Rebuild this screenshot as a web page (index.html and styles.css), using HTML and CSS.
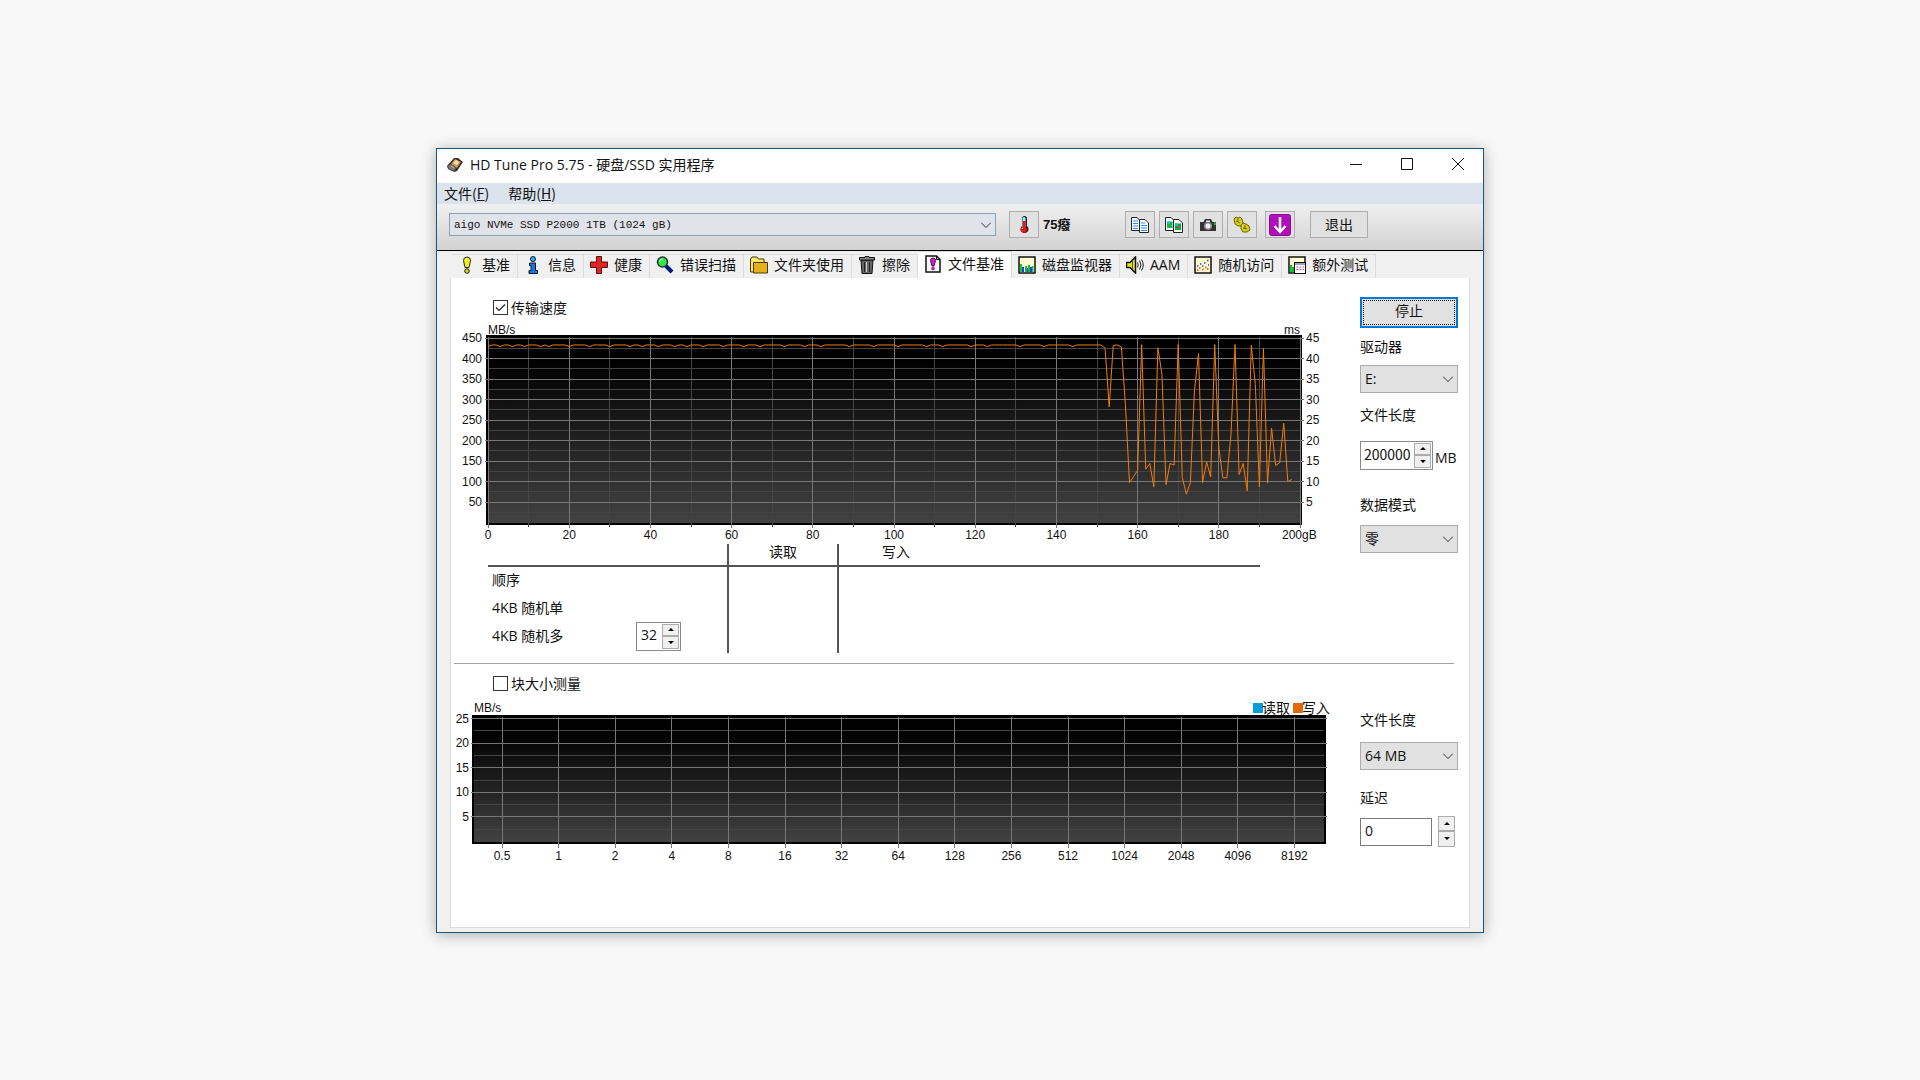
FILE: index.html
```html
<!DOCTYPE html>
<html lang="zh-CN">
<head>
  <meta charset="UTF-8">
  <meta name="viewport" content="width=device-width, initial-scale=1.0">
  <title>HD Tune Pro 5.75 - 硬盘/SSD 实用程序</title>
  <link rel="stylesheet" href="styles.css">
</head>
<body>
  <div class="window">
    <header class="titlebar">
      <svg class="app-icon" viewBox="0 0 16 16">
        <path d="M0 9 7 1 11 1 16 5 10 14 7 15 1 12Z" fill="#3a2d28"/>
        <path d="M4 7 8 2 14 5 10 11Z" fill="#c9975a"/>
        <path d="M6 6 9 3 12 5 10 8Z" fill="#f6dfae"/>
        <path d="M1 9 4 7 9 11 7 14 2 12Z" fill="#77737c"/>
        <path d="M4 9 7 11" stroke="#e6c34a"/>
      </svg>
      <h1 class="title">HD Tune Pro 5.75 - 硬盘/SSD 实用程序</h1>
      <button class="win-btn" aria-label="最小化"><svg viewBox="0 0 12 12"><path d="M0 6.5H12"/></svg></button>
      <button class="win-btn" aria-label="最大化"><svg viewBox="0 0 12 12"><path d="M.5 .5H11.5V11.5H.5Z"/></svg></button>
      <button class="win-btn" aria-label="关闭"><svg viewBox="0 0 12 12"><path d="M0 0 12 12M12 0 0 12"/></svg></button>
    </header>

    <nav class="menubar">
      <button class="menu">文件(<u>F</u>)</button>
      <button class="menu">帮助(<u>H</u>)</button>
    </nav>

    <div class="toolbar">
      <select class="drive" aria-label="硬盘">
        <option>aigo NVMe SSD P2000 1TB (1024 gB)</option>
      </select>
      <button class="tool" aria-label="温度">
        <svg viewBox="0 0 18 18">
          <path d="M7 2.500a2.500 2.500 0 0 1 5 0V10a4 4 0 1 1-5 0Z" fill="#222"/>
          <path d="M7.500 2.500a1.500 1.500 0 0 1 3 0V11H7.500Z" fill="#8ff"/>
          <path d="M8 5H10.500V11A3 3 0 1 1 7 11L8 10.500Z" fill="#e8141c"/>
          <path d="M7 13a1 1 0 0 1 1-1" stroke="#fff" fill="none"/>
        </svg>
      </button>
      <span class="temp">75癈</span>
      <div class="tools">
        <button class="tool" aria-label="复制文本">
          <svg viewBox="0 0 18 18">
            <path d="M.5 1.500H6L9 4.500V14.500H.5Z" fill="#fff" stroke="#222"/>
            <path d="M2 5H7M2 7.500H7M2 10H7M2 12.500H7" stroke="#1e90ff"/>
            <path d="M8.500 3.500H14L17.500 7V16.500H8.500Z" fill="#fff" stroke="#222"/>
            <path d="M10 7H14M10 9.500H16M10 12H16M10 14.500H16" stroke="#1e90ff"/>
          </svg>
        </button>
        <button class="tool" aria-label="复制图像">
          <svg viewBox="0 0 18 18">
            <path d="M.5 1.500H6L9 4.500V14.500H.5Z" fill="#fff" stroke="#222"/>
            <path d="M2 5.500H7.500V12H2Z" fill="#19b44a"/><path d="M2 5.500H5V8H2Z" fill="#16c5d8"/>
            <path d="M8.500 3.500H14L17.500 7V16.500H8.500Z" fill="#fff" stroke="#222"/>
            <path d="M10 7.500H16V14H10Z" fill="#12a53e"/><path d="M10 7.500H13V10H10Z" fill="#15bfd6"/><path d="M13 10H15V12H13Z" fill="#e33"/>
          </svg>
        </button>
        <button class="tool" aria-label="截图">
          <svg viewBox="0 0 18 18">
            <path d="M1 6H4.500L6 3H12L13.500 6H17V15H1Z" fill="#333"/>
            <path d="M7 4.500H11V6H7Z" fill="#ddd"/>
            <circle cx="9" cy="10" r="4" fill="#888"/><circle cx="9" cy="10" r="2.500" fill="#eee"/>
            <path d="M15 6.500H17V9H15Z" fill="#2b4"/>
          </svg>
        </button>
        <button class="tool" aria-label="选项">
          <svg viewBox="0 0 18 18">
            <path d="M1 3 3 1 5 2 7 1 9 3 10 7 8 10 5 10 2 8Z" fill="#d8cc1c" stroke="#6d6600"/>
            <path d="M8 9 10 7 13 8 16 10 17 14 14 16 10 16 8 13Z" fill="#d8cc1c" stroke="#6d6600"/>
            <path d="M5 2V6M3 5 7 7M12 9V13M10 12 14 13" stroke="#6d6600" fill="none"/>
          </svg>
        </button>
        <button class="tool tool-save" aria-label="保存">
          <svg viewBox="0 0 22 22">
            <rect x=".5" y=".5" width="21" height="21" rx="2" fill="#b40cbc" stroke="#8d0a94"/>
            <path d="M11 3V17M5.500 12 11 18 16.500 12" stroke="#fff" stroke-width="2.500" fill="none"/>
          </svg>
        </button>
        <button class="exit">退出</button>
      </div>
    </div>

    <div class="tabs" role="tablist">
      <button class="tab" role="tab">
        <svg viewBox="0 0 18 18">
          <path d="M5.500 4.500a3.500 3.500 0 0 1 7 0L11 11.500H7Z" fill="#f2ee1c" stroke="#222"/>
          <circle cx="9" cy="15" r="2.300" fill="#d8d212" stroke="#222"/>
          <path d="M7.500 4a1.500 1.500 0 0 1 1.500-1.500" stroke="#fff" fill="none"/>
        </svg>基准</button>
      <button class="tab" role="tab">
        <svg viewBox="0 0 18 18">
          <circle cx="9" cy="3" r="2.500" fill="#27b7ee" stroke="#113"/>
          <path d="M5.500 7H11.500V14.500H13.500V17.500H5V14.500H7V9.500H5.500Z" fill="#1379d8" stroke="#113"/>
        </svg>信息</button>
      <button class="tab" role="tab">
        <svg viewBox="0 0 18 18">
          <path d="M6.500 .5H11.500V6H17.500V11.500H11.500V17.500H6.500V11.500H.5V6H6.500Z" fill="#e32222" stroke="#5b1010"/>
        </svg>健康</button>
      <button class="tab" role="tab">
        <svg viewBox="0 0 18 18">
          <path d="M10 10 16 16" stroke="#001a80" stroke-width="4"/>
          <circle cx="6.500" cy="6" r="5" fill="#2fe84a" stroke="#233" stroke-width="1.500"/>
          <path d="M3.500 6a3 3 0 0 1 3-3" stroke="#cfffd5" fill="none"/>
        </svg>错误扫描</button>
      <button class="tab" role="tab">
        <svg viewBox="0 0 18 18">
          <path d="M.5 16V3L2 1H7L8.500 3H14V16Z" fill="#f8e56a" stroke="#4b3b00"/>
          <path d="M3.500 6.500H17.500V17H3.500Z" fill="#e3b21c" stroke="#4b3b00"/>
        </svg>文件夹使用</button>
      <button class="tab" role="tab">
        <svg viewBox="0 0 18 18">
          <path d="M3 4H15L14 17.500H4Z" fill="#666" stroke="#111"/>
          <path d="M6.500 6V16M11.500 6V16" stroke="#222"/><path d="M8.500 6V16" stroke="#ccc"/>
          <path d="M1.500 1.500H7V.5H11V1.500H16.500V4H1.500Z" fill="#888" stroke="#111"/>
        </svg>擦除</button>
      <button class="tab tab-active" role="tab" aria-selected="true">
        <svg viewBox="0 0 18 18">
          <path d="M2 1H12.500L16 4.500V17H2Z" fill="#fff" stroke="#111" stroke-width="1.500"/>
          <path d="M12.500 1V4.500H16" fill="none" stroke="#111"/>
          <path d="M6.500 5.500a2.500 2.500 0 0 1 5 0L10 11H8Z" fill="#d41cd0" stroke="#505"/>
          <circle cx="9" cy="13.500" r="1.500" fill="#d41cd0" stroke="#505" stroke-width=".5"/>
        </svg>文件基准</button>
      <button class="tab" role="tab">
        <svg viewBox="0 0 18 18">
          <rect x="1" y="1" width="16" height="16" fill="#fffbd0" stroke="#111" stroke-width="1.500"/>
          <path d="M2 8H4V16H2ZM7 10H9V16H7ZM10 9H12V16H10ZM14 10H15.500V16H14Z" fill="#12c23a"/>
          <path d="M4 11H6V16H4ZM9 12H10V16H9ZM12 11H14V16H12Z" fill="#2340d8"/>
        </svg>磁盘监视器</button>
      <button class="tab" role="tab">
        <svg viewBox="0 0 18 18">
          <path d="M.5 6.500H4L9.500 1V17L4 11.500H.5Z" fill="#e9e21e" stroke="#111" stroke-width="1.500"/>
          <path d="M6.500 5V13" stroke="#555"/>
          <path d="M11.500 6.500Q13 9 11.500 11.500M13.500 4.500Q16.500 9 13.500 13.500M15.500 3.500Q19 9 15.500 14.500" stroke="#222" fill="none"/>
        </svg>AAM</button>
      <button class="tab" role="tab">
        <svg viewBox="0 0 18 18">
          <rect x="1" y="1" width="16" height="16" fill="#fff8c8" stroke="#111" stroke-width="1.500"/>
          <path d="M3 10H4.500M6 8H7.500M8 10H9.500M10 7H11.500M13 4.500H14.500M14 9H15" stroke="#3a4ae0" stroke-width="1.500"/>
          <path d="M3 14H4.500M5 12H6.500M8 13.500H9.500M11 11.500H12.500M13 13H14.500" stroke="#e04a3a" stroke-width="1.500"/>
        </svg>随机访问</button>
      <button class="tab" role="tab">
        <svg viewBox="0 0 18 18">
          <rect x="1" y="1" width="16" height="16" fill="#fffbd0" stroke="#111" stroke-width="1.500"/>
          <path d="M2 9H4V16H2ZM4 11H6V16H4Z" fill="#12c23a"/>
          <rect x="6.500" y="6.500" width="11" height="11" fill="#fff" stroke="#111"/>
          <path d="M7 8H17" stroke="#8fa0c8" stroke-width="2"/>
          <path d="M8.500 11H10M11.500 11H13M14.500 11H16M8.500 13.500H10M11.500 13.500H13M14.500 13.500H16" stroke="#c33a5a"/>
        </svg>额外测试</button>
    </div>

    <main class="panel">
      <section class="section">
        <div class="measure">
          <label class="check"><input type="checkbox" checked>传输速度</label>
          <svg class="chart" id="transferChart" viewBox="0 0 889 224"></svg>
          <table class="results">
            <thead>
              <tr><th class="col-name"></th><th class="col-read">读取</th><th class="col-write">写入</th></tr>
            </thead>
            <tbody>
              <tr><td>顺序</td><td></td><td></td></tr>
              <tr><td>4KB 随机单</td><td></td><td></td></tr>
              <tr>
                <td>
                  <div class="queue">
                    <label for="queueDepth">4KB 随机多</label>
                    <span class="spinner spinner-small">
                      <input id="queueDepth" type="text" value="32">
                      <span class="steps">
                        <button class="step" aria-label="增加"><svg viewBox="0 0 6 3"><path d="M0 3 3 0 6 3Z"/></svg></button>
                        <button class="step" aria-label="减少"><svg viewBox="0 0 6 3"><path d="M0 0 3 3 6 0Z"/></svg></button>
                      </span>
                    </span>
                  </div>
                </td>
                <td></td><td></td>
              </tr>
            </tbody>
          </table>
        </div>
        <aside class="side">
          <button class="stop">停止</button>
          <label class="caption" for="drive">驱动器</label>
          <select class="field" id="drive"><option>E:</option></select>
          <label class="caption caption-gap" for="fileLength">文件长度</label>
          <div class="length">
            <span class="spinner">
              <input id="fileLength" type="text" value="200000">
              <span class="steps">
                <button class="step" aria-label="增加"><svg viewBox="0 0 6 3"><path d="M0 3 3 0 6 3Z"/></svg></button>
                <button class="step" aria-label="减少"><svg viewBox="0 0 6 3"><path d="M0 0 3 3 6 0Z"/></svg></button>
              </span>
            </span>
            <span class="unit">MB</span>
          </div>
          <label class="caption caption-wide" for="dataMode">数据模式</label>
          <select class="field" id="dataMode"><option>零</option></select>
        </aside>
      </section>

      <section class="section section-block">
        <div class="measure">
          <label class="check"><input type="checkbox">块大小测量</label>
          <svg class="chart" id="blockChart" viewBox="0 0 889 176"></svg>
        </div>
        <aside class="side">
          <label class="caption" for="blockLength">文件长度</label>
          <select class="field" id="blockLength"><option>64 MB</option></select>
          <label class="caption caption-wide" for="delay">延迟</label>
          <div class="delay">
            <input id="delay" type="text" value="0">
            <span class="steps">
              <button class="step" aria-label="增加"><svg viewBox="0 0 6 3"><path d="M0 3 3 0 6 3Z"/></svg></button>
              <button class="step" aria-label="减少"><svg viewBox="0 0 6 3"><path d="M0 0 3 3 6 0Z"/></svg></button>
            </span>
          </div>
        </aside>
      </section>
    </main>
  </div>

  <script src="charts.js"></script>
</body>
</html>
```

FILE: charts.js
```js
const SVG_NS = 'http://www.w3.org/2000/svg';

function add(parent, name, attrs, text) {
  const el = document.createElementNS(SVG_NS, name);
  for (const key in attrs) el.setAttribute(key, attrs[key]);
  if (text !== undefined) el.textContent = text;
  parent.appendChild(el);
  return el;
}

function line(svg, x1, y1, x2, y2, cls) {
  add(svg, 'line', { x1, y1, x2, y2, class: cls });
}

// dark plot area with a black frame
function drawFrame(svg, left, top, right, bottom) {
  const id = svg.id + 'Fill';
  const fill = add(add(svg, 'defs', {}), 'linearGradient', { id, x1: 0, y1: 0, x2: 0, y2: 1 });
  add(fill, 'stop', { offset: '12%', 'stop-color': '#000' });
  add(fill, 'stop', { offset: '100%', 'stop-color': '#424242' });
  add(svg, 'rect', { x: left, y: top, width: right - left, height: bottom - top, class: 'frame' });
  add(svg, 'rect', { x: left + 2, y: top + 2, width: right - left - 4, height: bottom - top - 4, fill: 'url(#' + id + ')' });
}

// transfer rate, MB/s per gB written
const dips = [3, 6, 9, 13, 15, 20, 25, 30, 35, 38, 42, 46, 49, 53, 58, 63, 67, 73, 78, 82, 89, 95, 101, 108, 112, 119, 123, 131, 137, 144];
const rates = [];
for (let i = 0; i < 152; i++) rates.push(dips.includes(i) || i === 0 ? 429 : 433);
rates.push(
  425, 282, 432, 433, 428, 288, 97, 112, 127, 434, 130, 144, 87, 426, 361, 92,
  144, 140, 434, 110, 69, 97, 321, 412, 97, 148, 111, 434, 183, 109, 109, 215,
  434, 117, 144, 77, 432, 337, 87, 425, 96, 230, 139, 146, 242, 100, 105
);

function drawTransfer() {
  const svg = document.getElementById('transferChart');
  const x = (gb) => 37 + gb * 4.06;
  const y = (mb) => 204.5 - mb * 0.41;

  drawFrame(svg, 35, 17, 851, 207);
  for (let v = 25; v <= 425; v += 50) line(svg, 37, y(v), 849, y(v), 'minor');
  for (let v = 10; v < 200; v += 20) line(svg, x(v), 19, x(v), 209, 'minor');
  for (let v = 50; v <= 450; v += 50) {
    line(svg, 34, y(v), 853, y(v), 'major');
    add(svg, 'text', { x: 31, y: y(v) + 4, class: 'end' }, v);
    add(svg, 'text', { x: 855, y: y(v) + 4 }, v / 10);
  }
  for (let v = 0; v <= 200; v += 20) {
    line(svg, x(v), 19, x(v), 210, 'major');
    if (v < 200) add(svg, 'text', { x: x(v), y: 221, class: 'middle' }, v);
  }
  add(svg, 'text', { x: 831, y: 221 }, '200gB');
  add(svg, 'text', { x: 37, y: 16 }, 'MB/s');
  add(svg, 'text', { x: 849, y: 16, class: 'end' }, 'ms');
  add(svg, 'polyline', { points: rates.map((r, i) => x(i) + ',' + y(r)).join(' '), class: 'rate' });
}

function drawBlock() {
  const svg = document.getElementById('blockChart');
  const sizes = [0.5, 1, 2, 4, 8, 16, 32, 64, 128, 256, 512, 1024, 2048, 4096, 8192];
  const y = (mb) => 146.5 - mb * 4.92;

  drawFrame(svg, 21, 20, 875, 149);
  for (let v = 2.5; v < 25; v += 5) line(svg, 23, y(v), 873, y(v), 'minor');
  for (let v = 5; v <= 25; v += 5) {
    line(svg, 20, y(v), 876, y(v), 'major');
    add(svg, 'text', { x: 18, y: y(v) + 4, class: 'end' }, v);
  }
  sizes.forEach((size, i) => {
    const x = 51 + i * 56.6;
    line(svg, x, 22, x, 153, 'major');
    add(svg, 'text', { x: x, y: 165, class: 'middle' }, size);
  });
  add(svg, 'text', { x: 23, y: 17 }, 'MB/s');

  add(svg, 'rect', { x: 802, y: 8, width: 10, height: 10, fill: '#0a9bd8' });
  add(svg, 'text', { x: 811, y: 18, class: 'legend' }, '读取');
  add(svg, 'rect', { x: 842, y: 8, width: 10, height: 10, fill: '#e0690a' });
  add(svg, 'text', { x: 851, y: 18, class: 'legend' }, '写入');
}

drawTransfer();
drawBlock();
```

FILE: styles.css
```css
* {
  box-sizing: border-box;
}
body {
  margin: 0;
  min-height: 100vh;
  display: flex;
  align-items: center;
  justify-content: center;
  background: #f8f8f8;
  color: #111;
  font-family: "Open Sans", "Noto Sans CJK SC", sans-serif;
  font-size: 14px;
  line-height: 20px;
}
button,
input,
select {
  font: inherit;
  color: inherit;
  border-radius: 0;
}
button {
  padding: 0;
}
.window {
  width: 1048px;
  max-width: 100%;
  background: #f0f0f0;
  border: 1px solid #17577c;
  box-shadow: 0 2px 14px rgba(0, 0, 0, 0.3);
}

/* title bar */
.titlebar {
  display: flex;
  align-items: center;
  height: 34px;
  padding: 0 0 2px 10px;
  background: #fff;
}
.app-icon {
  width: 16px;
  height: 16px;
}
.title {
  flex: 1;
  margin: 0 0 0 7px;
  font-size: 14px;
  font-weight: normal;
}
.win-btn {
  width: 51px;
  height: 32px;
  border: 0;
  background: none;
}
.win-btn svg {
  width: 12px;
  height: 12px;
  fill: none;
  stroke: #111;
}

/* menu */
.menubar {
  display: flex;
  gap: 19px;
  height: 21px;
  padding: 0 0 2px 7px;
  background: #dbe3ec;
}
.menu {
  border: 0;
  background: none;
  font-family: "Noto Sans CJK SC", sans-serif;
}

/* toolbar */
.toolbar {
  display: flex;
  align-items: center;
  height: 47px;
  padding: 0 115px 4px 12px;
  background: linear-gradient(#f0f0f0, #d2d2d2);
  border-bottom: 1px solid #000;
}
select {
  appearance: none;
  background: #e1e1e1 url("data:image/svg+xml,%3Csvg xmlns='http://www.w3.org/2000/svg' viewBox='0 0 10 6'%3E%3Cpath d='M0 .5 5 5.500 10 .5' fill='none' stroke='%23333'/%3E%3C/svg%3E") no-repeat right 4px center / 10px 6px;
  border: 1px solid #adadad;
}
.drive {
  flex: 1;
  height: 23px;
  padding: 0 4px;
  background-color: #e1e3ea;
  border-color: #86a3b8;
  font-family: "Liberation Mono", monospace;
  font-size: 11px;
}
.tool,
.exit {
  width: 30px;
  height: 27px;
  background: #e1e1e1;
  border: 1px solid #adadad;
}
.tool svg {
  display: block;
  width: 18px;
  height: 18px;
  margin: auto;
}
.drive + .tool {
  margin-left: 13px;
}
.temp {
  width: 82px;
  margin-left: 4px;
  font-family: "Liberation Sans", "Noto Sans CJK SC", sans-serif;
  font-size: 13px;
  font-weight: bold;
}
.tools {
  display: flex;
  gap: 4px;
}
.tool-save {
  margin-left: 4px;
}
.tool-save svg {
  width: 22px;
  height: 22px;
}
.exit {
  width: 58px;
  margin-left: 11px;
}

/* tabs */
.tabs {
  display: flex;
  height: 27px;
  padding: 3px 0 0 15px;
}
.tab {
  display: flex;
  align-items: center;
  gap: 6px;
  padding: 0 7px 2px 6px;
  background: #f0f0f0;
  border: 1px solid #dcdcdc;
  border-width: 1px 1px 0 0;
  white-space: nowrap;
}
.tab svg {
  width: 18px;
  height: 18px;
}
.tab-active {
  margin-top: -3px;
  background: #fff;
}

/* page */
.panel {
  margin: 0 13px 4px;
  min-height: 650px;
  background: #fff;
  border: 1px solid #dcdcdc;
  border-top: 0;
}
.section {
  display: flex;
  padding: 20px 11px 10px 0;
}
.section-block {
  padding-top: 11px;
  position: relative;
}
.section-block::before {
  content: "";
  position: absolute;
  top: 0;
  left: 3px;
  right: 15px;
  border-top: 1px solid #a0a0a0;
}
.measure {
  flex: 1;
}
.check {
  display: flex;
  align-items: center;
  gap: 3px;
  margin-left: 42px;
}
.check input {
  appearance: none;
  width: 15px;
  height: 15px;
  margin: 0;
  background: #fff;
  border: 1px solid #333;
}
.check input:checked {
  background: url("data:image/svg+xml,%3Csvg xmlns='http://www.w3.org/2000/svg' viewBox='0 0 13 13'%3E%3Cpath d='M2 6.500 5 9.500 11 3.500' fill='none' stroke='%23222' stroke-width='1.200'/%3E%3C/svg%3E");
}

/* charts */
.chart {
  display: block;
  width: 100%;
  max-width: 889px;
  overflow: visible;
  font-family: "Liberation Sans", sans-serif;
  font-size: 12px;
  fill: #111;
}
.section-block .chart {
  margin-top: 1px;
}
.chart .end {
  text-anchor: end;
}
.chart .middle {
  text-anchor: middle;
}
.chart .legend {
  font-family: "Noto Sans CJK SC", sans-serif;
  font-size: 14px;
}
.frame {
  fill: #000;
}
.major,
.minor {
  stroke: #777;
  shape-rendering: crispEdges;
}
.minor {
  stroke: #444;
}
.rate {
  fill: none;
  stroke: #f07c0c;
}

/* results */
.results {
  width: 772px;
  margin: 2px 0 0 37px;
  border-collapse: collapse;
  table-layout: fixed;
}
.results th,
.results td {
  height: 28px;
  padding: 0 0 0 4px;
  border-left: 2px solid #555;
  text-align: left;
  font-weight: normal;
}
.results th {
  height: 22px;
  padding-bottom: 4px;
  border-bottom: 2px solid #555;
  line-height: 16px;
}
.results th:first-child,
.results td:first-child {
  border-left: 0;
}
.results .col-name {
  width: 240px;
}
.results .col-read {
  width: 110px;
  padding-left: 0;
  text-align: center;
}
.results .col-write {
  padding-left: 43px;
}
.queue {
  display: flex;
  align-items: center;
  justify-content: space-between;
  padding: 0 46px 2px 0;
}

/* spinners */
.spinner {
  display: flex;
  width: 73px;
  height: 29px;
  padding: 1px;
  background: #fff;
  border: 1px solid #8a8a8a;
}
.spinner-small {
  width: 45px;
}
.spinner input {
  flex: 1;
  min-width: 0;
  padding: 0 0 3px 3px;
  border: 0;
  background: none;
}
.steps {
  display: flex;
  flex-direction: column;
  width: 17px;
}
.step {
  flex: 1;
  display: flex;
  align-items: center;
  justify-content: center;
  background: #f0f0f0;
  border: 1px solid #acacac;
}
.step svg {
  width: 6px;
  height: 3px;
}
#fileLength {
  padding-left: 2px;
  font-family: "Noto Sans CJK SC", sans-serif;
}

/* right column */
.side {
  display: flex;
  flex-direction: column;
  width: 98px;
}
.stop {
  height: 31px;
  margin-top: -1px;
  padding-bottom: 2px;
  background: #e1e1e1;
  border: 2px solid #0078d7;
  outline: 1px dotted #000;
  outline-offset: -4px;
}
.caption {
  margin-top: 9px;
}
.field {
  height: 28px;
  margin-top: 8px;
  padding: 0 4px;
}
.caption-gap {
  margin-top: 12px;
}
.length {
  display: flex;
  align-items: center;
  gap: 2px;
  margin-top: 16px;
}
.unit {
  padding-top: 6px;
}
.caption-wide {
  margin-top: 25px;
}
#dataMode {
  margin-top: 10px;
}
.section-block .side {
  padding-top: 27px;
}
.section-block .field {
  margin-top: 12px;
}
.section-block .caption-wide {
  margin-top: 18px;
}
.delay {
  display: flex;
  gap: 6px;
  height: 31px;
  margin-top: 8px;
}
.delay input {
  width: 72px;
  height: 28px;
  margin-top: 2px;
  padding: 0 0 2px 4px;
  background: #fff;
  border: 1px solid #7a7a7a;
}
```
